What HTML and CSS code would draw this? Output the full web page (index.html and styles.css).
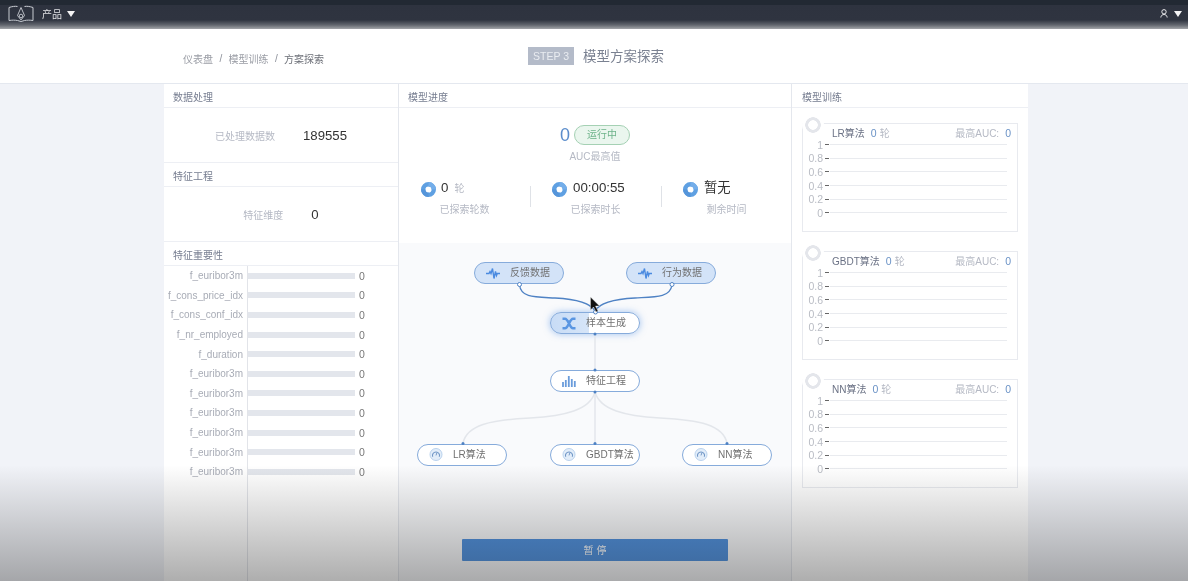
FILE: index.html
```html
<!DOCTYPE html>
<html lang="zh">
<head>
<meta charset="utf-8">
<title>模型方案探索</title>
<link rel="stylesheet" href="styles.css">
</head>
<body>
<svg class="defs" width="0" height="0">
  <defs>
    <symbol id="pulse" viewBox="0 0 14 10"><path d="M0 5h3l1-2 1 2 1.500-5 1.500 10 1.500-7 1 4 .8-2H14" fill="none" stroke="#4a8ae0" stroke-width="1.400"/></symbol>
    <symbol id="gauge" viewBox="0 0 14 14"><circle cx="7" cy="7" r="6.500" fill="#e2edf9" stroke="#a9c6e8" stroke-width=".8"/><path d="M3.500 9.500a3.800 3.800 0 1 1 7 0" fill="none" stroke="#6c93c4" stroke-width="1.100"/><path d="M7 8l1-3" stroke="#6c93c4" stroke-width="1"/></symbol>
    <symbol id="dot" viewBox="0 0 16 16"><circle cx="8" cy="8" r="5.650" fill="none" stroke="#5fa0e2" stroke-width="4.700"/><path d="M8 0a8 8 0 0 1 8 8h-4.700a3.300 3.300 0 0 0-3.300-3.300z" fill="#74aeea"/><path d="M8 16a8 8 0 0 1-8-8h4.700a3.300 3.300 0 0 0 3.300 3.300z" fill="#5595da"/></symbol>
  </defs>
</svg>

<header class="topbar">
  <div class="topbar-left">
    <svg class="logo" viewBox="0 0 26 17" width="26" height="17"><path d="M9.500 1.500C7 1 4 1.500 1 2.500V15.500C4 15 7 15 9.500 15.500L13 16.500 16.500 15.500C19 15 22 15 25 15.500V2.500C22 1.500 19 1 16.500 1.500" fill="none" stroke="#c8ccd2" stroke-width="1"/><path d="M13 2.500L9.500 10.500 13 15 16.500 10.500z" fill="none" stroke="#c8ccd2" stroke-width=".9"/><circle cx="13" cy="11" r="1.800" fill="none" stroke="#c8ccd2" stroke-width=".9"/></svg>
    <span class="product">产品</span>
    <span class="caret"></span>
  </div>
  <div class="topbar-right">
    <svg class="user" viewBox="0 0 8 9" width="8" height="9"><circle cx="4" cy="2.800" r="2.200" fill="none" stroke="#e8e9eb" stroke-width="1"/><path d="M.8 8.500c.3-2 1.500-3 3.200-3s2.900 1 3.200 3" fill="none" stroke="#e8e9eb" stroke-width="1"/></svg>
    <span class="caret"></span>
  </div>
</header>

<section class="subbar">
  <nav class="crumbs">
    <span>仪表盘</span><i>/</i><span>模型训练</span><i>/</i><span class="current">方案探索</span>
  </nav>
  <div class="step">
    <span class="step-badge">STEP 3</span>
    <h1 class="step-title">模型方案探索</h1>
  </div>
</section>

<main class="board">
  <div class="col col-left">
    <h2 class="title">数据处理</h2>
    <div class="metric"><span class="metric-label">已处理数据数</span><span class="metric-value">189555</span></div>
    <h2 class="title">特征工程</h2>
    <div class="metric"><span class="metric-label">特征维度</span><span class="metric-value">0</span></div>
    <h2 class="title">特征重要性</h2>
    <ul class="bars">
      <li><span class="bar-name">f_euribor3m</span><span class="bar-track"></span><span class="bar-val">0</span></li>
      <li><span class="bar-name">f_cons_price_idx</span><span class="bar-track"></span><span class="bar-val">0</span></li>
      <li><span class="bar-name">f_cons_conf_idx</span><span class="bar-track"></span><span class="bar-val">0</span></li>
      <li><span class="bar-name">f_nr_employed</span><span class="bar-track"></span><span class="bar-val">0</span></li>
      <li><span class="bar-name">f_duration</span><span class="bar-track"></span><span class="bar-val">0</span></li>
      <li><span class="bar-name">f_euribor3m</span><span class="bar-track"></span><span class="bar-val">0</span></li>
      <li><span class="bar-name">f_euribor3m</span><span class="bar-track"></span><span class="bar-val">0</span></li>
      <li><span class="bar-name">f_euribor3m</span><span class="bar-track"></span><span class="bar-val">0</span></li>
      <li><span class="bar-name">f_euribor3m</span><span class="bar-track"></span><span class="bar-val">0</span></li>
      <li><span class="bar-name">f_euribor3m</span><span class="bar-track"></span><span class="bar-val">0</span></li>
      <li><span class="bar-name">f_euribor3m</span><span class="bar-track"></span><span class="bar-val">0</span></li>
    </ul>
  </div>

  <div class="col col-mid">
    <h2 class="title">模型进度</h2>
    <div class="progress">
      <div class="auc-row"><span class="auc-num">0</span><span class="pill">运行中</span></div>
      <div class="auc-label">AUC最高值</div>
      <div class="stats">
        <div class="stat">
          <div class="stat-value"><svg class="stat-dot"><use href="#dot"/></svg><span class="num">0</span><span class="unit">轮</span></div>
          <div class="stat-label">已探索轮数</div>
        </div>
        <div class="stat">
          <div class="stat-value"><svg class="stat-dot"><use href="#dot"/></svg><span class="num">00:00:55</span></div>
          <div class="stat-label">已探索时长</div>
        </div>
        <div class="stat">
          <div class="stat-value"><svg class="stat-dot"><use href="#dot"/></svg><span class="num">暂无</span></div>
          <div class="stat-label">剩余时间</div>
        </div>
      </div>
    </div>

    <div class="canvas">
      <div class="node filled n-feedback"><svg class="ico"><use href="#pulse"/></svg>反馈数据</div>
      <div class="node filled n-behavior"><svg class="ico"><use href="#pulse"/></svg>行为数据</div>
      <div class="node active n-sample">
        <svg class="ico" viewBox="0 0 14 12"><path d="M.5 1.200h2.500c3.500 0 4.500 9.600 8 9.600h2.500M.5 10.800h2.500c3.500 0 4.500-9.600 8-9.600h2.500" fill="none" stroke="#5a96e2" stroke-width="2.600"/></svg>样本生成</div>
      <div class="node n-feature">
        <svg class="ico" viewBox="0 0 14 11"><path d="M1 11V6M3.800 11V4M6.800 11V0M9.800 11V3M12.800 11V5" stroke="#6a9cdb" stroke-width="1.800"/></svg>特征工程</div>
      <div class="node n-lr"><svg class="ico"><use href="#gauge"/></svg>LR算法</div>
      <div class="node n-gbdt"><svg class="ico"><use href="#gauge"/></svg>GBDT算法</div>
      <div class="node n-nn"><svg class="ico"><use href="#gauge"/></svg>NN算法</div>

      <svg class="wires" viewBox="399 243 393 338" width="393" height="338">
        <g fill="none" stroke="#e3e6eb" stroke-width="1.500">
          <path d="M595 334V370M595 392V443"/>
          <path d="M595 392C590 410 565 416 530 418C490 420 467 425 463 443"/>
          <path d="M595 392C600 410 625 416 660 418C700 420 723 425 727 443"/>
        </g>
        <g fill="none" stroke="#4f82c4" stroke-width="1.300">
          <path d="M519.500 285C521 298 535 297 555 298C575 299 590 302 595 311"/>
          <path d="M672 285C670 298 655 297 635 298C615 299 600 302 595 311"/>
        </g>
        <g fill="#fff" stroke="#4f82c4" stroke-width="1">
          <circle cx="519.500" cy="284.500" r="2"/><circle cx="672" cy="284.500" r="2"/><circle cx="595.500" cy="312" r="2"/>
        </g>
        <g fill="#4f82c4">
          <circle cx="595" cy="334" r="1.500"/><circle cx="595" cy="370" r="1.500"/><circle cx="595" cy="392" r="1.500"/>
          <circle cx="463" cy="443.500" r="1.500"/><circle cx="595" cy="443.500" r="1.500"/><circle cx="727" cy="443.500" r="1.500"/>
        </g>
        <path d="M590.500 297v13l3-3 2.500 5 2-1-2.500-5h4z" fill="#111" stroke="#eee" stroke-width=".4"/>
      </svg>

      <button class="pause">暂 停</button>
    </div>
  </div>

  <div class="col col-right">
    <h2 class="title">模型训练</h2>
    <div class="cards">
      <article class="card">
        <span class="ring"></span>
        <div class="card-head"><span class="algo">LR算法</span><b>0</b><span class="lun">轮</span><span class="best">最高AUC:</span><b>0</b></div>
        <div class="chart">
          <div class="tick"><span>1</span></div><div class="tick"><span>0.8</span></div><div class="tick"><span>0.6</span></div><div class="tick"><span>0.4</span></div><div class="tick"><span>0.2</span></div><div class="tick"><span>0</span></div>
        </div>
      </article>
      <article class="card">
        <span class="ring"></span>
        <div class="card-head"><span class="algo">GBDT算法</span><b>0</b><span class="lun">轮</span><span class="best">最高AUC:</span><b>0</b></div>
        <div class="chart">
          <div class="tick"><span>1</span></div><div class="tick"><span>0.8</span></div><div class="tick"><span>0.6</span></div><div class="tick"><span>0.4</span></div><div class="tick"><span>0.2</span></div><div class="tick"><span>0</span></div>
        </div>
      </article>
      <article class="card">
        <span class="ring"></span>
        <div class="card-head"><span class="algo">NN算法</span><b>0</b><span class="lun">轮</span><span class="best">最高AUC:</span><b>0</b></div>
        <div class="chart">
          <div class="tick"><span>1</span></div><div class="tick"><span>0.8</span></div><div class="tick"><span>0.6</span></div><div class="tick"><span>0.4</span></div><div class="tick"><span>0.2</span></div><div class="tick"><span>0</span></div>
        </div>
      </article>
    </div>
  </div>
</main>

<div class="fade"></div>
</body>
</html>
```

FILE: styles.css
```css
* { box-sizing: border-box; }
html, body { margin: 0; height: 581px; overflow: hidden; }
body {
  position: relative;
  background: #f1f3f8;
  font-family: "Liberation Sans", "Noto Sans CJK SC", sans-serif;
  font-size: 10px;
  color: #666;
}
.defs { position: absolute; }
.topbar, .subbar, .board { filter: blur(.35px); }

.topbar {
  height: 29px;
  display: flex;
  justify-content: space-between;
  align-items: center;
  padding: 0 6px 2px 8px;
  background: linear-gradient(#222933 0, #222933 4.500px, #2e333f 5px, #2f3440 20px, #62666e 25px, #a3a5a9 29px);
}
.topbar-left, .topbar-right { display: flex; align-items: center; }
.product { margin-left: 8px; color: #dfe0e3; font-size: 10px; width: 20px; }
.caret {
  width: 0; height: 0;
  margin-left: 5px;
  border-left: 4.500px solid transparent;
  border-right: 4.500px solid transparent;
  border-top: 6px solid #f4f4f5;
}
.user + .caret { margin-left: 6px; }

.subbar {
  height: 55px;
  display: flex;
  background: #fff;
  border-bottom: 1px solid #e4e8ef;
}
.crumbs {
  display: flex;
  align-items: center;
  gap: 5px;
  padding: 4px 0 0 183px;
  color: #9a9da5;
  width: 528px;
}
.crumbs i { font-style: normal; width: 2.500px; color: #8e929b; margin: 0 1.500px; }
.crumbs .current { color: #6d7078; }
.step { display: flex; align-items: center; gap: 9px; }
.step-badge {
  width: 46px; height: 18px;
  background: #b4bbc9;
  color: #e9ecf1;
  font-size: 10.500px;
  line-height: 18px;
  text-align: center;
}
.step-title { margin: 0 0 2px; font-size: 13.500px; font-weight: 400; color: #7a8191; }

.board {
  margin-left: 164px;
  width: 864px;
  height: 497px;
  display: grid;
  grid-template-columns: 235px 393px 236px;
}
.col { background: #fff; display: flex; flex-direction: column; min-height: 0; }
.col-left, .col-mid { border-right: 1px solid #e4e7ed; }
.title {
  height: 24px;
  margin: 0;
  padding-left: 9px;
  font-size: 10px;
  font-weight: 400;
  line-height: 27px;
  color: #767d90;
  border-bottom: 1.500px solid #edeff4;
  flex: none;
}
.col-right .title { padding-left: 10px; }
.metric {
  height: 55px;
  flex: none;
  display: flex;
  justify-content: center;
  align-items: center;
  gap: 28px;
  padding-top: 1px;
  border-bottom: 1px solid #edeff4;
}
.metric-label { color: #b5b9c4; }
.metric-value { font-size: 13.200px; color: #333; }

.bars { list-style: none; margin: 0; padding: 0; position: relative; flex: 1; }
.bars::before { content: ""; position: absolute; left: 83px; top: 0; bottom: 0; width: 1px; background: #e2e4e9; }
.bars li { height: 19.600px; display: flex; align-items: center; }
.bar-name { width: 79px; color: #a8acb6; white-space: nowrap; text-align: right; }
.bar-track { width: 107px; height: 6px; margin-left: 5px; background: #e3e6ec; }
.bar-val { margin-left: 4px; font-size: 10.500px; color: #777; }

.progress { height: 135px; flex: none; }
.auc-row { display: flex; justify-content: center; align-items: center; gap: 4px; padding-top: 17px; }
.auc-num { font-size: 18px; line-height: 20px; color: #5a8ccb; }
.pill {
  width: 56px; height: 20px;
  border: 1px solid #a5d1b4;
  border-radius: 10px;
  background: #eaf6ee;
  color: #6db38a;
  line-height: 18px;
  text-align: center;
}
.auc-label { margin-top: 5px; line-height: 14px; text-align: center; color: #b5b9c4; }
.stats { display: grid; grid-template-columns: repeat(3, 131px); margin-top: 16px; }
.stat { position: relative; }
.stat + .stat::before { content: ""; position: absolute; left: 0; top: 6px; width: 1px; height: 21px; background: #dfe2e7; }
.stat-value { display: flex; align-items: flex-start; height: 18px; padding-left: 22px; }
.stat-dot { width: 15px; height: 15px; margin-top: 2px; }
.num { margin-left: 6px; font-size: 13.300px; line-height: 16px; color: #333; }
.stat:first-child .num { margin-left: 5px; }
.unit { margin-left: 6px; line-height: 18px; color: #b5b9c4; }
.stat-label { margin-top: 5px; line-height: 14px; text-align: center; color: #b5b9c4; }

.canvas { position: relative; flex: 1; background: #f9fafc; }
.wires { position: absolute; left: 0; top: 0; }
.node {
  position: absolute;
  width: 90px; height: 22px;
  border: 1.300px solid #86abdb;
  border-radius: 11px;
  background: #fff;
  display: flex;
  align-items: center;
  padding-left: 11px;
  line-height: 18px;
  color: #707070;
}
.ico { width: 14px; height: 13px; margin-right: 10px; flex: none; }
.filled { background: #d3e3f8; }
.active {
  background: linear-gradient(90deg, #c8dcf6 0, #d6e5f8 38px, #fff 38.500px);
  box-shadow: 0 0 7px rgba(90, 150, 230, .55);
}
.n-feedback { left: 75px; top: 19px; }
.n-behavior { left: 227px; top: 19px; }
.n-sample { left: 151px; top: 69px; }
.n-feature { left: 151px; top: 127px; }
.n-lr { left: 18px; top: 200.500px; }
.n-gbdt { left: 151px; top: 200.500px; }
.n-nn { left: 283px; top: 200.500px; }
.pause {
  position: absolute;
  left: 63px; top: 296px;
  width: 266px; height: 22px;
  border: 0;
  padding: 0 0 2px;
  border-radius: 1px;
  background: #4e90de;
  color: #fff;
  font: inherit;
  font-size: 10px;
}

.cards { padding: 15px 0 0 10px; display: flex; flex-direction: column; gap: 19px; }
.card {
  position: relative;
  width: 216px; height: 109px;
  border: 1.500px solid #e8eaef;
}
.ring {
  position: absolute;
  left: -1.500px; top: -10px;
  width: 22px; height: 22px;
  background: radial-gradient(circle, #fff 0 4.500px, #e4e6eb 5px 7.500px, #fff 8px);
  border-radius: 50% 50% 0 50%;
}
.card-head { display: flex; align-items: center; height: 14px; padding: 2px 6px 0 29px; color: #b5b9c4; }
.card-head b { font-weight: 400; color: #6a92c6; margin: 2px 3px 0 6px; font-size: 10.500px; }
.card-head b:last-child { margin-right: 0; }
.algo { color: #6b7285; }
.best { margin-left: auto; }
.tick {
  height: 13.600px;
  display: flex;
  align-items: center;
  color: #b9bcc4;
  font-size: 10.500px;
}
.tick span { order: -1; width: 20px; text-align: right; flex: none; }
.tick::before { content: ""; width: 4px; height: 1px; margin-left: 2px; background: #666; flex: none; }
.tick::after { content: ""; flex: 1; height: 1px; margin: 0 10px 0 1px; background: #e9ebef; }

.fade {
  position: absolute;
  left: 0; right: 0; top: 465px; bottom: 0;
  background: linear-gradient(rgba(30, 30, 30, 0), rgba(30, 30, 30, .36));
  pointer-events: none;
}
```
